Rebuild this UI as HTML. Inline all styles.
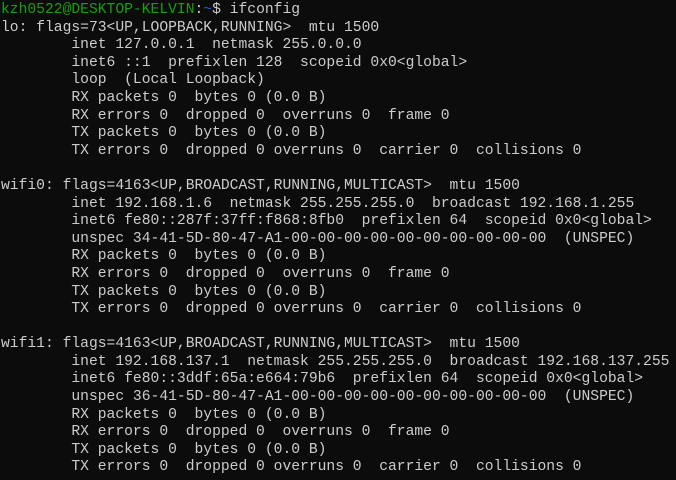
<!DOCTYPE html>
<html><head><meta charset="utf-8"><style>
html,body{margin:0;padding:0;background:#0c0c0c;width:676px;height:480px;overflow:hidden}
pre{margin:0;padding:2px 0 0 1px;font-family:"Liberation Mono","Noto Sans CJK SC",monospace;font-size:14.67px;line-height:17.6px;color:#cccccc;white-space:pre}
.g{color:#13a10e}.b{color:#2a5bd7}
</style></head><body><pre><span class="g">kzh0522@DESKTOP-KELVIN</span>:<span class="b">~</span>$ ifconfig
lo: flags=73&lt;UP,LOOPBACK,RUNNING&gt;  mtu 1500
        inet 127.0.0.1  netmask 255.0.0.0
        inet6 ::1  prefixlen 128  scopeid 0x0&lt;global&gt;
        loop  (Local Loopback)
        RX packets 0  bytes 0 (0.0 B)
        RX errors 0  dropped 0  overruns 0  frame 0
        TX packets 0  bytes 0 (0.0 B)
        TX errors 0  dropped 0 overruns 0  carrier 0  collisions 0

wifi0: flags=4163&lt;UP,BROADCAST,RUNNING,MULTICAST&gt;  mtu 1500
        inet 192.168.1.6  netmask 255.255.255.0  broadcast 192.168.1.255
        inet6 fe80::287f:37ff:f868:8fb0  prefixlen 64  scopeid 0x0&lt;global&gt;
        unspec 34-41-5D-80-47-A1-00-00-00-00-00-00-00-00-00-00  (UNSPEC)
        RX packets 0  bytes 0 (0.0 B)
        RX errors 0  dropped 0  overruns 0  frame 0
        TX packets 0  bytes 0 (0.0 B)
        TX errors 0  dropped 0 overruns 0  carrier 0  collisions 0

wifi1: flags=4163&lt;UP,BROADCAST,RUNNING,MULTICAST&gt;  mtu 1500
        inet 192.168.137.1  netmask 255.255.255.0  broadcast 192.168.137.255
        inet6 fe80::3ddf:65a:e664:79b6  prefixlen 64  scopeid 0x0&lt;global&gt;
        unspec 36-41-5D-80-47-A1-00-00-00-00-00-00-00-00-00-00  (UNSPEC)
        RX packets 0  bytes 0 (0.0 B)
        RX errors 0  dropped 0  overruns 0  frame 0
        TX packets 0  bytes 0 (0.0 B)
        TX errors 0  dropped 0 overruns 0  carrier 0  collisions 0</pre></body></html>
